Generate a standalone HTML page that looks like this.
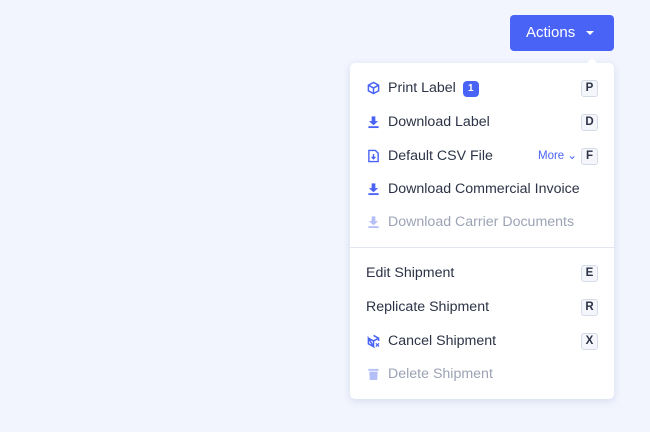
<!DOCTYPE html>
<html><head><style>
body{margin:0;width:650px;height:432px;background:#f2f5fe;font-family:"Liberation Sans",sans-serif;position:relative;overflow:hidden}
.btn{position:absolute;left:510px;top:15px;width:104px;height:36px;background:#4a63f7;border-radius:4px;color:#fff;font-size:15px;line-height:36px;box-sizing:border-box;padding-left:16px}
.btn:after{content:"";position:absolute;left:76px;top:16px;border:4px solid transparent;border-top:4px solid #fff;border-bottom:0}
.menu{position:absolute;left:350px;top:63px;width:264px;height:336px;background:#fff;border-radius:5px;box-shadow:0 2px 8px rgba(60,80,150,.15)}
.menu:before{content:"";position:absolute;left:236px;top:-5px;border:6px solid transparent;border-bottom:6px solid #fff;border-top:0}
.row{position:absolute;left:0;width:264px;height:20px;font-size:14.2px;color:#2c3346;line-height:20px}
.row .t{position:absolute;left:38px}
.row.p .t{left:16px}
.dis{color:#9ca3b5}
.ic{position:absolute;left:17px;top:3px;width:13px;height:14px}
.k{position:absolute;left:231px;top:2px;width:17px;height:17px;border:1px solid #d6dbe8;border-radius:3px;background:#f4f6fc;font-size:11.5px;line-height:15px;text-align:center;color:#2c3346;font-weight:bold;box-sizing:border-box}
.badge{display:inline-block;background:#4a63f7;color:#fff;font-size:10px;font-weight:bold;border-radius:4px;width:16px;height:16px;line-height:16px;text-align:center;margin-left:7px;vertical-align:1px}
.more{position:absolute;left:188px;color:#4a63f7;font-size:11.5px}
.div{position:absolute;left:0;top:184px;width:264px;height:1px;background:#e1e5ee}
</style></head><body>
<div class="btn">Actions</div>
<div class="menu">
<div class="row" style="top:15px"><svg class="ic" viewBox="0 0 14 14" fill="none" stroke="#4a63f7" stroke-width="1.6"><path d="M7 1L12.5 4V10L7 13L1.5 10V4Z M1.5 4L7 7L12.5 4 M7 7V13"/></svg><span class="t">Print Label<span class="badge">1</span></span><span class="k">P</span></div>
<div class="row" style="top:49px"><svg class="ic" viewBox="0 0 14 14" fill="#4a63f7"><path d="M5 1H9V6H12L7 10.5L2 6H5Z"/><rect x="1.5" y="11.5" width="11" height="2"/></svg><span class="t">Download Label</span><span class="k">D</span></div>
<div class="row" style="top:83px"><svg class="ic" viewBox="0 0 14 14" fill="none" stroke="#4a63f7" stroke-width="1.5"><path d="M2 1H9L12 4V13H2Z"/><path d="M7 5V10M5 8L7 10L9 8"/></svg><span class="t">Default CSV File</span><span class="more">More ⌄</span><span class="k">F</span></div>
<div class="row" style="top:116px"><svg class="ic" viewBox="0 0 14 14" fill="#4a63f7"><path d="M5 1H9V6H12L7 10.5L2 6H5Z"/><rect x="1.5" y="11.5" width="11" height="2"/></svg><span class="t">Download Commercial Invoice</span></div>
<div class="row dis" style="top:149px"><svg class="ic" viewBox="0 0 14 14" fill="#b4bff8"><path d="M5 1H9V6H12L7 10.5L2 6H5Z"/><rect x="1.5" y="11.5" width="11" height="2"/></svg><span class="t">Download Carrier Documents</span></div>
<div class="div"></div>
<div class="row p" style="top:200px"><span class="t">Edit Shipment</span><span class="k">E</span></div>
<div class="row p" style="top:234px"><span class="t">Replicate Shipment</span><span class="k">R</span></div>
<div class="row" style="top:268px"><svg class="ic" viewBox="0 0 14 14" fill="none" stroke="#4a63f7" stroke-width="1.6"><path d="M7 1L12.5 4V7 M7 13L1.5 10V4Z M1.5 4L7 7L12.5 4 M7 7V13"/><path d="M9.5 9.5L13 13M13 9.5L9.5 13" stroke-width="1.3"/></svg><span class="t">Cancel Shipment</span><span class="k">X</span></div>
<div class="row dis" style="top:301px"><svg class="ic" viewBox="0 0 14 14" fill="#b4bff8"><rect x="1.5" y="1.5" width="11" height="2"/><path d="M2.5 4.5H11.5L11 13.5H3Z"/></svg><span class="t">Delete Shipment</span></div>
</div>
</body></html>
